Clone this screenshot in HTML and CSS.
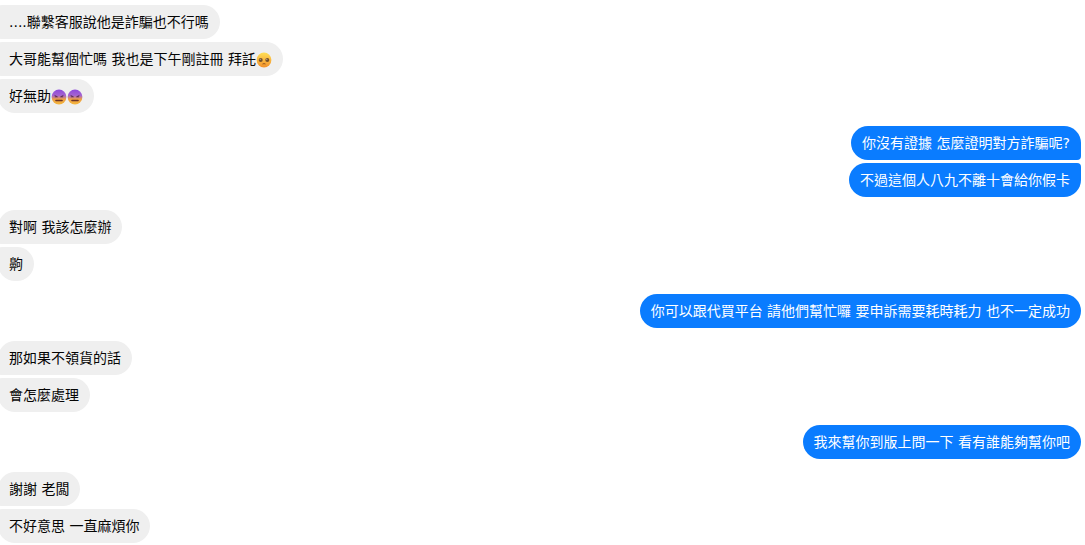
FILE: index.html
```html
<!DOCTYPE html>
<html lang="zh-Hant">
<head>
<meta charset="UTF-8">
<title>Chat</title>
<meta name="viewport" content="width=device-width, initial-scale=1.0">
<link rel="stylesheet" href="styles.css">
</head>
<body>

<!-- emoji shapes, used by the messages below -->
<svg class="defs" aria-hidden="true">
  <defs>
    <linearGradient id="yellow" x1="0" y1="0" x2="0" y2="1">
      <stop offset="0" stop-color="#ffdf55"/>
      <stop offset="1" stop-color="#f3912b"/>
    </linearGradient>
    <linearGradient id="purple" x1="0" y1="0" x2="0" y2="1">
      <stop offset="0" stop-color="#8d49dc"/>
      <stop offset=".4" stop-color="#a564cf"/>
      <stop offset=".65" stop-color="#eda044"/>
      <stop offset="1" stop-color="#f4b63b"/>
    </linearGradient>
    <symbol id="plead" viewBox="0 0 16 16">
      <circle cx="8" cy="8" r="7.4" fill="url(#yellow)"/>
      <circle cx="4.7" cy="8" r="2" fill="#75502a"/>
      <circle cx="11.3" cy="8" r="2" fill="#75502a"/>
      <circle cx="4.2" cy="7.3" r=".5" fill="#e8dcc8"/>
      <circle cx="10.8" cy="7.3" r=".5" fill="#e8dcc8"/>
      <path d="M6.5 12Q8 11.2 9.5 12" fill="none" stroke="#8a4c1c" stroke-width=".9"/>
    </symbol>
    <symbol id="upset" viewBox="0 0 16 16">
      <circle cx="8" cy="8" r="7.4" fill="url(#purple)"/>
      <path d="M3.6 6.4L6.4 7.8H3.8M12.4 6.4L9.6 7.8H12.2" fill="none" stroke="#5a2c50" stroke-width=".9"/>
      <path d="M5 11.5H11" fill="none" stroke="#6b3327" stroke-width="1.6" stroke-linecap="round"/>
    </symbol>
  </defs>
</svg>

<main class="chat">
  <div class="group in cont">
    <p class="msg">....聯繫客服說他是詐騙也不行嗎</p>
    <p class="msg">大哥能幫個忙嗎 我也是下午剛註冊 拜託<svg class="emoji" role="img" aria-label="🥺"><use href="#plead"/></svg></p>
    <p class="msg">好無助<svg class="emoji" role="img" aria-label="😖"><use href="#upset"/></svg><svg class="emoji" role="img" aria-label="😖"><use href="#upset"/></svg></p>
  </div>

  <div class="group out">
    <p class="msg">你沒有證據 怎麼證明對方詐騙呢?</p>
    <p class="msg">不過這個人八九不離十會給你假卡</p>
  </div>

  <div class="group in">
    <p class="msg">對啊 我該怎麼辦</p>
    <p class="msg">齁</p>
  </div>

  <div class="group out">
    <p class="msg">你可以跟代買平台 請他們幫忙囉 要申訴需要耗時耗力 也不一定成功</p>
  </div>

  <div class="group in">
    <p class="msg">那如果不領貨的話</p>
    <p class="msg">會怎麼處理</p>
  </div>

  <div class="group out">
    <p class="msg">我來幫你到版上問一下 看有誰能夠幫你吧</p>
  </div>

  <div class="group in">
    <p class="msg">謝謝 老闆</p>
    <p class="msg">不好意思 一直麻煩你</p>
  </div>
</main>

</body>
</html>
```
FILE: styles.css
```css
*{box-sizing:border-box}
body{
  margin:0; background:#fff; color:#050505;
  font-family:"DejaVu Sans","Noto Sans CJK TC",sans-serif;
  font-size:14px; line-height:20px;
}
.defs{display:block; width:0; height:0}

.chat{
  display:flex; flex-direction:column; gap:13px;
  padding:5px 4px 0 0; overflow:hidden;
}
.group{display:flex; flex-direction:column; gap:3px}

.msg{
  margin:0; padding:7px 11px;
  border-radius:17px; max-width:80%;
}

/* received, the bubbles run just past the left edge */
.in{align-items:flex-start; margin-left:-2px}
.in .msg{background:#efefef}
.in .msg:not(:last-child){border-bottom-left-radius:4px}
.in .msg:not(:first-child),
.cont .msg:first-child{border-top-left-radius:4px}

/* sent */
.out{align-items:flex-end}
.out .msg{background:#0a7cff; color:#fff}
.out .msg:not(:last-child){border-bottom-right-radius:4px}
.out .msg:not(:first-child){border-top-right-radius:4px}

.emoji{width:16px; height:16px; vertical-align:-4px}
```
